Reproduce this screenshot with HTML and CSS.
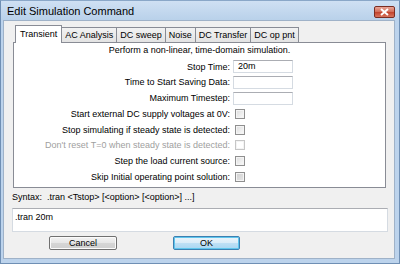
FILE: index.html
```html
<!DOCTYPE html>
<html lang="en">
<head>
    <meta charset="UTF-8">
    <title>Edit Simulation Command</title>
    <link rel="stylesheet" href="styles.css">
</head>
<body>
    <div class="ventana">
        <div class="titulo">
            <span class="titulo-texto">Edit Simulation Command</span>
            <span class="cerrar">
                <svg width="11" height="8" viewBox="0 0 11 8"><path d="M2 1 L9 7 M9 1 L2 7" stroke="#fff" stroke-width="2" fill="none"/></svg>
            </span>
        </div>
        <div class="cliente">
            <div class="pestanas">
                <div class="pestana activa">Transient</div>
                <div class="pestana">AC Analysis</div>
                <div class="pestana">DC sweep</div>
                <div class="pestana">Noise</div>
                <div class="pestana">DC Transfer</div>
                <div class="pestana">DC op pnt</div>
            </div>
            <div class="panel">
                <div class="descripcion">Perform a non-linear, time-domain simulation.</div>
                <div class="formulario">
                    <span class="etiqueta">Stop Time:</span>
                    <span class="campo">20m</span>
                    <span class="etiqueta">Time to Start Saving Data:</span>
                    <span class="campo"></span>
                    <span class="etiqueta">Maximum Timestep:</span>
                    <span class="campo"></span>
                    <span class="etiqueta">Start external DC supply voltages at 0V:</span>
                    <span class="casilla"></span>
                    <span class="etiqueta">Stop simulating if steady state is detected:</span>
                    <span class="casilla"></span>
                    <span class="etiqueta apagada">Don't reset T=0 when steady state is detected:</span>
                    <span class="casilla apagada"></span>
                    <span class="etiqueta">Step the load current source:</span>
                    <span class="casilla"></span>
                    <span class="etiqueta">Skip Initial operating point solution:</span>
                    <span class="casilla marcada"></span>
                </div>
            </div>
            <div class="sintaxis">
                <span class="sintaxis-titulo">Syntax:</span>
                <span>.tran &lt;Tstop&gt; [&lt;option&gt; [&lt;option&gt;] ...]</span>
            </div>
            <div class="comando">.tran 20m</div>
            <div class="botones">
                <button class="boton">Cancel</button>
                <button class="boton defecto">OK</button>
            </div>
        </div>
    </div>
</body>
</html>
```

FILE: styles.css
```css
body {
    margin: 0;
    width: 400px;
    height: 264px;
    overflow: hidden;
    font-family: "Liberation Sans", Arial, sans-serif;
    font-size: 9px;
    color: #000;
}

.ventana {
    width: 400px;
    height: 264px;
    box-sizing: border-box;
    background: #bcd3ec;
    border: 1px solid #6f8fb4;
    border-top-color: #8aa7c8;
    padding: 0 4px 4px 2px;
    display: flex;
    flex-direction: column;
}

.titulo {
    height: 19px;
    display: flex;
    align-items: center;
    justify-content: space-between;
    background: linear-gradient(to bottom, #cfe0f3, #b9d1ea);
    margin: 0 -4px 0 -2px;
    padding: 0 4px 0 6px;
}

.titulo-texto {
    font-size: 11px;
    color: #000;
    margin-top: 1px;
}

.cerrar {
    width: 21px;
    height: 12px;
    margin-top: 2px;
    box-sizing: border-box;
    border: 1px solid #7a2d22;
    border-radius: 2px;
    background: linear-gradient(to bottom, #e9a597, #d16a55 50%, #c1412b 51%, #d8745d);
    display: flex;
    align-items: center;
    justify-content: center;
}

.cliente {
    flex: 1;
    background: #f0f0f0;
    border: 1px solid #9fb2c8;
    display: flex;
    flex-direction: column;
}

/* pestañas */
.pestanas {
    display: flex;
    align-items: flex-end;
    height: 17px;
    margin: 5px 0 -1px 11px;
    position: relative;
    z-index: 1;
}

.pestana {
    height: 15px;
    box-sizing: border-box;
    padding: 0 3px;
    line-height: 14px;
    border: 1px solid #898c95;
    border-bottom: none;
    border-left: none;
    background: linear-gradient(to bottom, #f2f2f2, #e3e3e3);
    margin-bottom: 1px;
}

.pestana:first-child {
    border-left: 1px solid #898c95;
}

.pestana.activa {
    height: 18px;
    margin-bottom: 0;
    background: #fff;
    line-height: 16px;
    padding: 0 4px;
}

.panel {
    margin-left: 9px;
    width: 373px;
    height: 146px;
    box-sizing: border-box;
    background: #fff;
    border: 1px solid #898c95;
}

.descripcion {
    height: 15.75px;
    line-height: 15.75px;
    text-align: center;
}

.formulario {
    display: grid;
    grid-template-columns: 216px auto;
    column-gap: 3px;
    grid-auto-rows: 15.75px;
    align-items: center;
}

.etiqueta {
    text-align: right;
    white-space: nowrap;
}

.etiqueta.apagada {
    color: #a0a0a0;
}

.campo {
    width: 60px;
    height: 13px;
    box-sizing: border-box;
    border: 1px solid #d5dbe2;
    border-top-color: #abadb3;
    padding-left: 4px;
    line-height: 11px;
}

.casilla {
    width: 10px;
    height: 10px;
    box-sizing: border-box;
    margin-left: 2px;
    border: 1px solid #8f8f8f;
    background: linear-gradient(to bottom right, #dcdcdc, #fbfbfb);
    box-shadow: inset 0 0 0 1px #f4f4f4;
}

.casilla.apagada {
    border-color: #c6c6c6;
    background: #fff;
}

.casilla.marcada {
    background: linear-gradient(to bottom right, #cfcfcf, #e8e8e8);
}

/* parte inferior */
.sintaxis {
    height: 12px;
    line-height: 12px;
    margin: 3px 0 0 8px;
    display: flex;
}

.sintaxis-titulo {
    width: 35px;
    flex-shrink: 0;
}

.comando {
    margin: 5px 0 0 8px;
    width: 376px;
    height: 24px;
    box-sizing: border-box;
    background: #fff;
    border: 1px solid #d5dbe2;
    border-top-color: #abadb3;
    padding: 3px 0 0 2px;
}

.botones {
    display: flex;
    margin: 4px 0 0 45px;
    gap: 56px;
}

.boton {
    width: 68px;
    height: 14px;
    padding: 0;
    font-family: inherit;
    font-size: 9px;
    color: #000;
    border: 1px solid #707070;
    border-radius: 2px;
    background: linear-gradient(to bottom, #f3f3f3, #e6e6e6 50%, #d6d6d6 51%, #cfcfcf);
    box-shadow: inset 0 0 0 1px #fbfbfb;
}

.boton.defecto {
    width: 67px;
    border-color: #3c7fb1;
    background: linear-gradient(to bottom, #ebf4fb, #d9ecf8 50%, #bee0f5 51%, #a9d7f2);
    box-shadow: inset 0 0 0 1px #5fc6ed;
}
```
